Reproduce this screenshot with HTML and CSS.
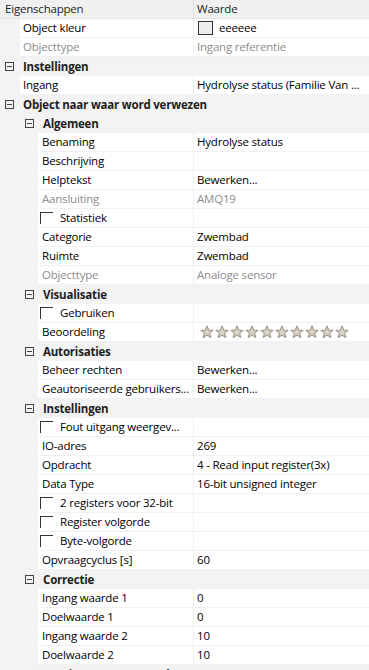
FILE: index.html
```html
<!DOCTYPE html>
<html>
<head>
<meta charset="utf-8">
<link rel="stylesheet" href="styles.css">
</head>
<body>
<div class="grid">
  <div class="hdr"><div class="hname">Eigenschappen</div><div class="hval">Waarde</div></div>

  <div class="row l1"><div class="gut"></div><div class="name">Object kleur</div><div class="val"><span class="swatch"></span>eeeeee</div></div>
  <div class="row l1 dim"><div class="gut"></div><div class="name">Objecttype</div><div class="val">Ingang referentie</div></div>

  <div class="cat c1"><span class="tog"></span><span class="ctext">Instellingen</span></div>
  <div class="row l1"><div class="gut"></div><div class="name">Ingang</div><div class="val">Hydrolyse status (Familie Van ...</div></div>

  <div class="cat c1"><span class="tog"></span><span class="ctext">Object naar waar word verwezen</span></div>

  <div class="cat c2"><span class="tog"></span><span class="ctext">Algemeen</span></div>
  <div class="row l2"><div class="gut"></div><div class="name">Benaming</div><div class="val">Hydrolyse status</div></div>
  <div class="row l2"><div class="gut"></div><div class="name">Beschrijving</div><div class="val"></div></div>
  <div class="row l2"><div class="gut"></div><div class="name">Helptekst</div><div class="val">Bewerken...</div></div>
  <div class="row l2 dim"><div class="gut"></div><div class="name">Aansluiting</div><div class="val">AMQ19</div></div>
  <div class="row l2"><div class="gut"></div><div class="name chk"><span class="box"></span>Statistiek</div><div class="val"></div></div>
  <div class="row l2"><div class="gut"></div><div class="name">Categorie</div><div class="val">Zwembad</div></div>
  <div class="row l2"><div class="gut"></div><div class="name">Ruimte</div><div class="val">Zwembad</div></div>
  <div class="row l2 dim"><div class="gut"></div><div class="name">Objecttype</div><div class="val">Analoge sensor</div></div>

  <div class="cat c2"><span class="tog"></span><span class="ctext">Visualisatie</span></div>
  <div class="row l2"><div class="gut"></div><div class="name chk"><span class="box"></span>Gebruiken</div><div class="val"></div></div>
  <div class="row l2"><div class="gut"></div><div class="name">Beoordeling</div><div class="val stars">
    <svg class="star" viewBox="0 0 14 14"><path d="M7 1 L8.7 5.1 L13 5.3 L9.6 8.1 L10.8 12.5 L7 10 L3.2 12.5 L4.4 8.1 L1 5.3 L5.3 5.1 Z"/></svg>
    <svg class="star" viewBox="0 0 14 14"><path d="M7 1 L8.7 5.1 L13 5.3 L9.6 8.1 L10.8 12.5 L7 10 L3.2 12.5 L4.4 8.1 L1 5.3 L5.3 5.1 Z"/></svg>
    <svg class="star" viewBox="0 0 14 14"><path d="M7 1 L8.7 5.1 L13 5.3 L9.6 8.1 L10.8 12.5 L7 10 L3.2 12.5 L4.4 8.1 L1 5.3 L5.3 5.1 Z"/></svg>
    <svg class="star" viewBox="0 0 14 14"><path d="M7 1 L8.7 5.1 L13 5.3 L9.6 8.1 L10.8 12.5 L7 10 L3.2 12.5 L4.4 8.1 L1 5.3 L5.3 5.1 Z"/></svg>
    <svg class="star" viewBox="0 0 14 14"><path d="M7 1 L8.7 5.1 L13 5.3 L9.6 8.1 L10.8 12.5 L7 10 L3.2 12.5 L4.4 8.1 L1 5.3 L5.3 5.1 Z"/></svg>
    <svg class="star" viewBox="0 0 14 14"><path d="M7 1 L8.7 5.1 L13 5.3 L9.6 8.1 L10.8 12.5 L7 10 L3.2 12.5 L4.4 8.1 L1 5.3 L5.3 5.1 Z"/></svg>
    <svg class="star" viewBox="0 0 14 14"><path d="M7 1 L8.7 5.1 L13 5.3 L9.6 8.1 L10.8 12.5 L7 10 L3.2 12.5 L4.4 8.1 L1 5.3 L5.3 5.1 Z"/></svg>
    <svg class="star" viewBox="0 0 14 14"><path d="M7 1 L8.7 5.1 L13 5.3 L9.6 8.1 L10.8 12.5 L7 10 L3.2 12.5 L4.4 8.1 L1 5.3 L5.3 5.1 Z"/></svg>
    <svg class="star" viewBox="0 0 14 14"><path d="M7 1 L8.7 5.1 L13 5.3 L9.6 8.1 L10.8 12.5 L7 10 L3.2 12.5 L4.4 8.1 L1 5.3 L5.3 5.1 Z"/></svg>
    <svg class="star" viewBox="0 0 14 14"><path d="M7 1 L8.7 5.1 L13 5.3 L9.6 8.1 L10.8 12.5 L7 10 L3.2 12.5 L4.4 8.1 L1 5.3 L5.3 5.1 Z"/></svg>
  </div></div>

  <div class="cat c2"><span class="tog"></span><span class="ctext">Autorisaties</span></div>
  <div class="row l2"><div class="gut"></div><div class="name">Beheer rechten</div><div class="val">Bewerken...</div></div>
  <div class="row l2"><div class="gut"></div><div class="name">Geautoriseerde gebruikers...</div><div class="val">Bewerken...</div></div>

  <div class="cat c2"><span class="tog"></span><span class="ctext">Instellingen</span></div>
  <div class="row l2"><div class="gut"></div><div class="name chk"><span class="box"></span>Fout uitgang weergev...</div><div class="val"></div></div>
  <div class="row l2"><div class="gut"></div><div class="name">IO-adres</div><div class="val">269</div></div>
  <div class="row l2"><div class="gut"></div><div class="name">Opdracht</div><div class="val">4 - Read input register(3x)</div></div>
  <div class="row l2"><div class="gut"></div><div class="name">Data Type</div><div class="val">16-bit unsigned integer</div></div>
  <div class="row l2"><div class="gut"></div><div class="name chk"><span class="box"></span>2 registers voor 32-bit</div><div class="val"></div></div>
  <div class="row l2"><div class="gut"></div><div class="name chk"><span class="box"></span>Register volgorde</div><div class="val"></div></div>
  <div class="row l2"><div class="gut"></div><div class="name chk"><span class="box"></span>Byte-volgorde</div><div class="val"></div></div>
  <div class="row l2"><div class="gut"></div><div class="name">Opvraagcyclus [s]</div><div class="val">60</div></div>

  <div class="cat c2"><span class="tog"></span><span class="ctext">Correctie</span></div>
  <div class="row l2"><div class="gut"></div><div class="name">Ingang waarde 1</div><div class="val">0</div></div>
  <div class="row l2"><div class="gut"></div><div class="name">Doelwaarde 1</div><div class="val">0</div></div>
  <div class="row l2"><div class="gut"></div><div class="name">Ingang waarde 2</div><div class="val">10</div></div>
  <div class="row l2"><div class="gut"></div><div class="name">Doelwaarde 2</div><div class="val">10</div></div>

  <div class="cat c2"><span class="tog"></span><span class="ctext">Logging (MySQL) Trend</span></div>
</div>
</body>
</html>
```

FILE: styles.css
```css
html, body {
  margin: 0;
  padding: 0;
  background: #f3f3f3;
  overflow: hidden;
}
.grid {
  width: 369px;
  height: 670px;
  overflow: hidden;
  font-family: "Segoe UI", "Open Sans", sans-serif;
  font-size: 11.5px;
  letter-spacing: -0.2px;
  color: #000;
  background: #f3f3f3;
}
.hdr {
  display: flex;
  height: 18px;
  line-height: 17px;
  border-bottom: 1px solid #e3e3e3;
  background: #f0f0f0;
  color: #1e1e1e;
}
.hname {
  width: 188px;
  padding-left: 5px;
  border-right: 1px solid #e0e0e0;
}
.hval {
  padding-left: 3px;
}
.row {
  display: flex;
  height: 19px;
}
.gut {
  flex: 0 0 auto;
  background: #f3f3f3;
}
.l1 .gut { width: 20px; }
.l2 .gut { width: 38px; }
.name, .val {
  height: 18px;
  line-height: 18px;
  background: #fff;
  border-bottom: 1px solid #f0f0f0;
  white-space: nowrap;
  overflow: hidden;
}
.name {
  flex: 0 0 auto;
}
.l1 .name { width: 170px; padding-left: 3px; }
.l2 .name { width: 151px; padding-left: 4px; }
.val {
  flex: 1 1 auto;
  border-left: 1px solid #f0f0f0;
  padding-left: 3px;
  display: flex;
  align-items: center;
}
.dim .name, .dim .val { color: #8d8d8d; }
.swatch {
  width: 13px;
  height: 12px;
  border: 1px solid #333;
  background: #eeeeee;
  margin-right: 6px;
  margin-left: 1px;
}
.chk {
  display: flex;
  align-items: flex-start;
}
.l2 .name.chk { padding-left: 2px; width: 153px; }
.box {
  width: 12px;
  height: 11px;
  margin-top: 3px;
  border-left: 1px solid #333;
  border-top: 1px solid #333;
  margin-right: 7px;
  flex: 0 0 auto;
}
.cat {
  display: flex;
  align-items: center;
  height: 19px;
  line-height: 19px;
  font-weight: bold;
  color: #1e1e1e;
  white-space: nowrap;
}
.tog {
  width: 7px;
  height: 7px;
  border: 1px solid #444;
  position: relative;
  flex: 0 0 auto;
}
.tog::after {
  content: "";
  position: absolute;
  left: 1px;
  top: 3px;
  width: 5px;
  height: 1px;
  background: #444;
}
.c1 .tog { margin-left: 5px; margin-right: 9px; }
.c2 .tog { margin-left: 25px; margin-right: 9px; }
.stars {
  gap: 1px;
  padding-left: 6px;
}
.star {
  width: 14px;
  height: 14px;
  flex: 0 0 auto;
}
.star path {
  fill: #d9d4c9;
  stroke: #a79f8c;
  stroke-width: 1.2;
  stroke-linejoin: round;
}
```
